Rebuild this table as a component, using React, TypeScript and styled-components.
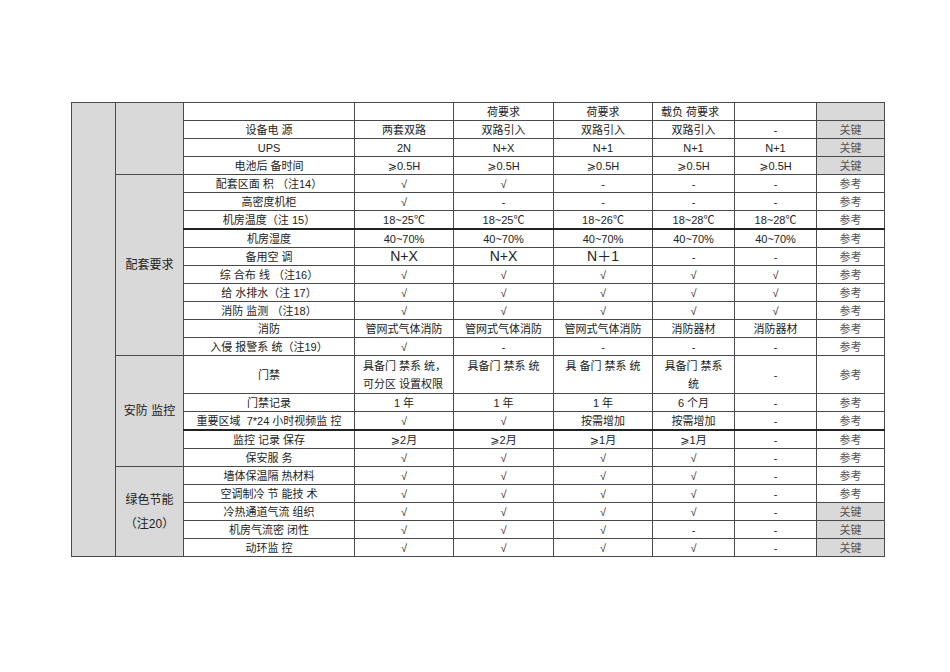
import React from 'react';
import styled, { createGlobalStyle } from 'styled-components';

type Tag = 'key' | 'ref';

interface Row {
  label: string;
  values: React.ReactNode[];
  tag: Tag;
  thick?: boolean;
}

const GlobalStyle = createGlobalStyle`
  html, body {
    margin: 0;
    background: #fff;
  }
  body {
    font-family: 'Liberation Sans', 'Noto Sans CJK SC', 'DejaVu Sans', sans-serif;
  }
`;

const Page = styled.div`
  width: 950px;
  height: 672px;
  box-sizing: border-box;
  padding: 102px 0 0 71px;
  background: #fff;
`;

const Sheet = styled.table`
  width: 813px;
  table-layout: fixed;
  border-collapse: collapse;
  color: #222;
  font-size: 11px;
`;

const Big = styled.span`
  font-size: 14px;
  line-height: 14px;
`;

const Cell = styled.td<{
  $gray?: boolean;
  $left?: boolean;
  $top?: boolean;
  $tall?: boolean;
  $thick?: boolean;
  $group?: boolean;
  $tag?: boolean;
}>`
  height: 17px;
  padding: ${(p) => (p.$left ? '0 0 0 8px' : '0')};
  border: 1px solid #4a4a4a;
  border-bottom: ${(p) => (p.$thick ? '2px solid #222' : '1px solid #4a4a4a')};
  background: ${(p) => (p.$gray ? '#d9d9d9' : '#fff')};
  text-align: ${(p) => (p.$left ? 'left' : 'center')};
  vertical-align: ${(p) => (p.$top ? 'top' : 'middle')};
  line-height: ${(p) => (p.$tall ? '18px' : '14px')};
  white-space: pre;
  color: ${(p) => (p.$tag ? '#555' : '#222')};
  font-size: ${(p) => (p.$group ? '12px' : '11px')};
  ${(p) => (p.$group ? 'line-height: 24px;' : '')}
  ${(p) => (p.$tall ? 'padding-top: 1px; height: 34px;' : '')}
`;

const GE = '\u2A7E';

const groups: { title: React.ReactNode; rows: Row[] }[] = [
  {
    title: '',
    rows: [
      { label: '设备电 源', values: ['两套双路', '双路引入', '双路引入', '双路引入', '-'], tag: 'key' },
      { label: 'UPS', values: ['2N', 'N+X', 'N+1', 'N+1', 'N+1'], tag: 'key' },
      {
        label: '电池后 备时间',
        values: [`${GE}0.5H`, `${GE}0.5H`, `${GE}0.5H`, `${GE}0.5H`, `${GE}0.5H`],
        tag: 'key',
      },
    ],
  },
  {
    title: '配套要求',
    rows: [
      { label: '配套区面 积 （注14）', values: ['√', '√', '-', '-', '-'], tag: 'ref' },
      { label: '高密度机柜', values: ['√', '-', '-', '-', '-'], tag: 'ref' },
      {
        label: '机房温度（注 15）',
        values: ['18~25℃', '18~25℃', '18~26℃', '18~28℃', '18~28℃'],
        tag: 'ref',
        thick: true,
      },
      { label: '机房湿度', values: ['40~70%', '40~70%', '40~70%', '40~70%', '40~70%'], tag: 'ref' },
      {
        label: '备用空 调',
        values: [<Big key="a">N+X</Big>, <Big key="b">N+X</Big>, <Big key="c">N＋1</Big>, '-', '-'],
        tag: 'ref',
      },
      { label: '综 合布 线 （注16）', values: ['√', '√', '√', '√', '√'], tag: 'ref' },
      { label: '给 水排水（注 17）', values: ['√', '√', '√', '√', '√'], tag: 'ref' },
      { label: '消防 监测 （注18）', values: ['√', '√', '√', '√', '√'], tag: 'ref' },
      {
        label: '消防',
        values: ['管网式气体消防', '管网式气体消防', '管网式气体消防', '消防器材', '消防器材'],
        tag: 'ref',
      },
      { label: '入侵 报警系 统（注19）', values: ['√', '-', '-', '-', '-'], tag: 'ref' },
    ],
  },
  {
    title: '安防 监控',
    rows: [
      { label: '门禁', values: [], tag: 'ref' },
      { label: '门禁记录', values: ['1 年', '1 年', '1 年', '6 个月', '-'], tag: 'ref' },
      {
        label: '重要区域  7*24 小时视频监 控',
        values: ['√', '√', '按需增加', '按需增加', '-'],
        tag: 'ref',
        thick: true,
      },
      { label: '监控 记录 保存', values: [`${GE}2月`, `${GE}2月`, `${GE}1月`, `${GE}1月`, '-'], tag: 'ref' },
      { label: '保安服 务', values: ['√', '√', '√', '√', '-'], tag: 'ref' },
    ],
  },
  {
    title: (
      <>
        绿色节能
        <br />
        （注20）
      </>
    ),
    rows: [
      { label: '墙体保温隔 热材料', values: ['√', '√', '√', '√', '-'], tag: 'ref' },
      { label: '空调制冷 节 能技 术', values: ['√', '√', '√', '√', '-'], tag: 'ref' },
      { label: '冷热通道气流 组织', values: ['√', '√', '√', '√', '-'], tag: 'key' },
      { label: '机房气流密 闭性', values: ['√', '√', '√', '-', '-'], tag: 'key' },
      { label: '动环监 控', values: ['√', '√', '√', '√', '-'], tag: 'key' },
    ],
  },
];

const totalRows = 1 + groups.reduce((n, g) => n + g.rows.length, 0);

export default function App() {
  return (
    <Page>
      <GlobalStyle />
      <Sheet>
        <colgroup>
          <col style={{ width: 44 }} />
          <col style={{ width: 68 }} />
          <col style={{ width: 171 }} />
          <col style={{ width: 99 }} />
          <col style={{ width: 100 }} />
          <col style={{ width: 99 }} />
          <col style={{ width: 82 }} />
          <col style={{ width: 82 }} />
          <col style={{ width: 68 }} />
        </colgroup>
        <tbody>
          <tr>
            <Cell $gray rowSpan={totalRows} />
            <Cell $gray rowSpan={groups[0].rows.length + 1} />
            <Cell />
            <Cell />
            <Cell>荷要求</Cell>
            <Cell>荷要求</Cell>
            <Cell $left>载负 荷要求</Cell>
            <Cell />
            <Cell $gray />
          </tr>
          {groups.map((g, gi) =>
            g.rows.map((r, ri) => (
              <tr key={`${gi}-${ri}`}>
                {gi > 0 && ri === 0 && (
                  <Cell $gray $group rowSpan={g.rows.length}>
                    {g.title}
                  </Cell>
                )}
                {r.label === '门禁' ? (
                  <>
                    <Cell $tall>门禁</Cell>
                    <Cell $left $tall>
                      具备门 禁系 统，
                      <br />
                      可分区 设置权限
                    </Cell>
                    <Cell $top $tall>具备门 禁系 统</Cell>
                    <Cell $top $tall>具 备门 禁系 统</Cell>
                    <Cell $tall>
                      具备门 禁系
                      <br />
                      统
                    </Cell>
                    <Cell $tall>-</Cell>
                  </>
                ) : (
                  <>
                    <Cell $thick={r.thick}>{r.label}</Cell>
                    {r.values.map((v, vi) => (
                      <Cell key={vi} $thick={r.thick}>
                        {v}
                      </Cell>
                    ))}
                  </>
                )}
                <Cell $gray={r.tag === 'key'} $tag $thick={r.thick}>
                  {r.tag === 'key' ? '关键' : '参考'}
                </Cell>
              </tr>
            ))
          )}
        </tbody>
      </Sheet>
    </Page>
  );
}
